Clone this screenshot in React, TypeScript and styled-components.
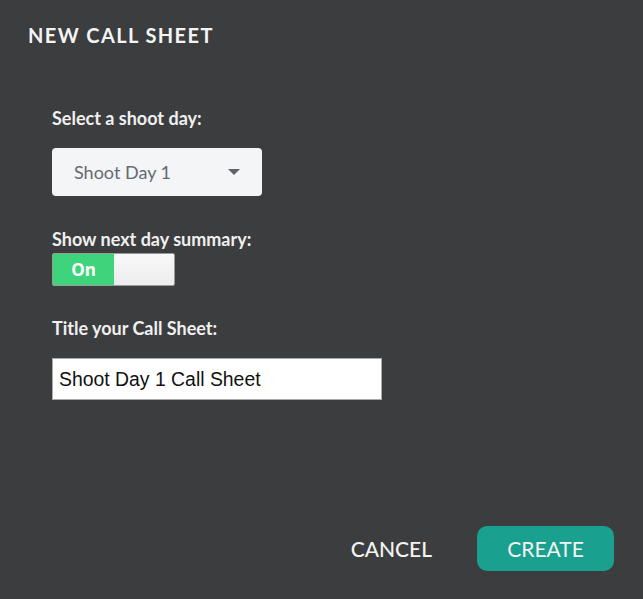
import styled, { createGlobalStyle } from "styled-components";
import { useState } from "react";

const GlobalStyle = createGlobalStyle`
  html, body {
    margin: 0;
    padding: 0;
    background: #3c3d3f;
  }
  * {
    box-sizing: border-box;
  }
`;

const Dialog = styled.div`
  width: 643px;
  height: 599px;
  background: #3c3d3f;
  font-family: Lato, "Open Sans", sans-serif;
  color: #ffffff;
  display: flex;
  flex-direction: column;
  padding: 23px 29px 28px 28px;
`;

const Title = styled.h1`
  margin: 0;
  font-size: 20px;
  font-weight: 700;
  letter-spacing: 1.4px;
  line-height: 24px;
  color: #f4f4f4;
`;

const Form = styled.div`
  display: flex;
  flex-direction: column;
  padding: 60px 0 0 24px;
  flex: 1;
`;

const Field = styled.div<{ gap: number; mb: number }>`
  display: flex;
  flex-direction: column;
  gap: ${(p) => p.gap}px;
  margin-bottom: ${(p) => p.mb}px;
`;

const Label = styled.label`
  font-size: 18px;
  font-weight: 700;
  line-height: 22px;
  color: #f0f0f0;
`;

const Select = styled.div`
  width: 210px;
  height: 48px;
  background: #f4f5f7;
  border-radius: 4px;
  display: flex;
  align-items: center;
  justify-content: space-between;
  padding: 0 22px 0 22px;
  font-size: 18px;
  color: #666a70;
`;

const Caret = styled.span`
  width: 0;
  height: 0;
  border-left: 6px solid transparent;
  border-right: 6px solid transparent;
  border-top: 6px solid #5f6368;
`;

const Toggle = styled.button`
  width: 123px;
  height: 33px;
  padding: 0;
  border: 1px solid #9a9a9a;
  border-radius: 2px;
  background: linear-gradient(#f8f8f8, #ececec);
  display: flex;
  cursor: pointer;
`;

const ToggleOn = styled.span`
  width: 61px;
  height: 100%;
  background: #3dd47c;
  color: #ffffff;
  font-family: "Open Sans", Lato, sans-serif;
  font-weight: 700;
  font-size: 17px;
  display: flex;
  align-items: center;
  justify-content: center;
`;

const TextInput = styled.input`
  width: 330px;
  height: 42px;
  border: 1px solid #a9a9a9;
  background: #ffffff;
  padding: 0 6px;
  font-family: "Liberation Sans", Arial, sans-serif;
  font-size: 19.4px;
  color: #111111;
  outline: none;
`;

const Footer = styled.div`
  display: flex;
  justify-content: flex-end;
  align-items: center;
  gap: 45px;
`;

const TextButton = styled.button`
  background: none;
  border: none;
  padding: 0;
  font-family: Lato, sans-serif;
  font-size: 21px;
  font-weight: 500;
  color: #f4f4f4;
  cursor: pointer;
`;

const PrimaryButton = styled.button`
  width: 137px;
  height: 45px;
  border: none;
  border-radius: 10px;
  background: #1aa08e;
  font-family: Lato, sans-serif;
  font-size: 21px;
  color: #f4f4f4;
  cursor: pointer;
`;

export default function App() {
  const [title, setTitle] = useState("Shoot Day 1 Call Sheet");
  const [on, setOn] = useState(true);

  return (
    <>
      <GlobalStyle />
      <Dialog>
        <Title>NEW CALL SHEET</Title>
        <Form>
          <Field gap={19} mb={32}>
            <Label>Select a shoot day:</Label>
            <Select>
              Shoot Day 1
              <Caret />
            </Select>
          </Field>
          <Field gap={3} mb={31}>
            <Label>Show next day summary:</Label>
            <Toggle onClick={() => setOn(!on)}>
              <ToggleOn>On</ToggleOn>
            </Toggle>
          </Field>
          <Field gap={19} mb={0}>
            <Label>Title your Call Sheet:</Label>
            <TextInput value={title} onChange={(e) => setTitle(e.target.value)} />
          </Field>
        </Form>
        <Footer>
          <TextButton>CANCEL</TextButton>
          <PrimaryButton>CREATE</PrimaryButton>
        </Footer>
      </Dialog>
    </>
  );
}
